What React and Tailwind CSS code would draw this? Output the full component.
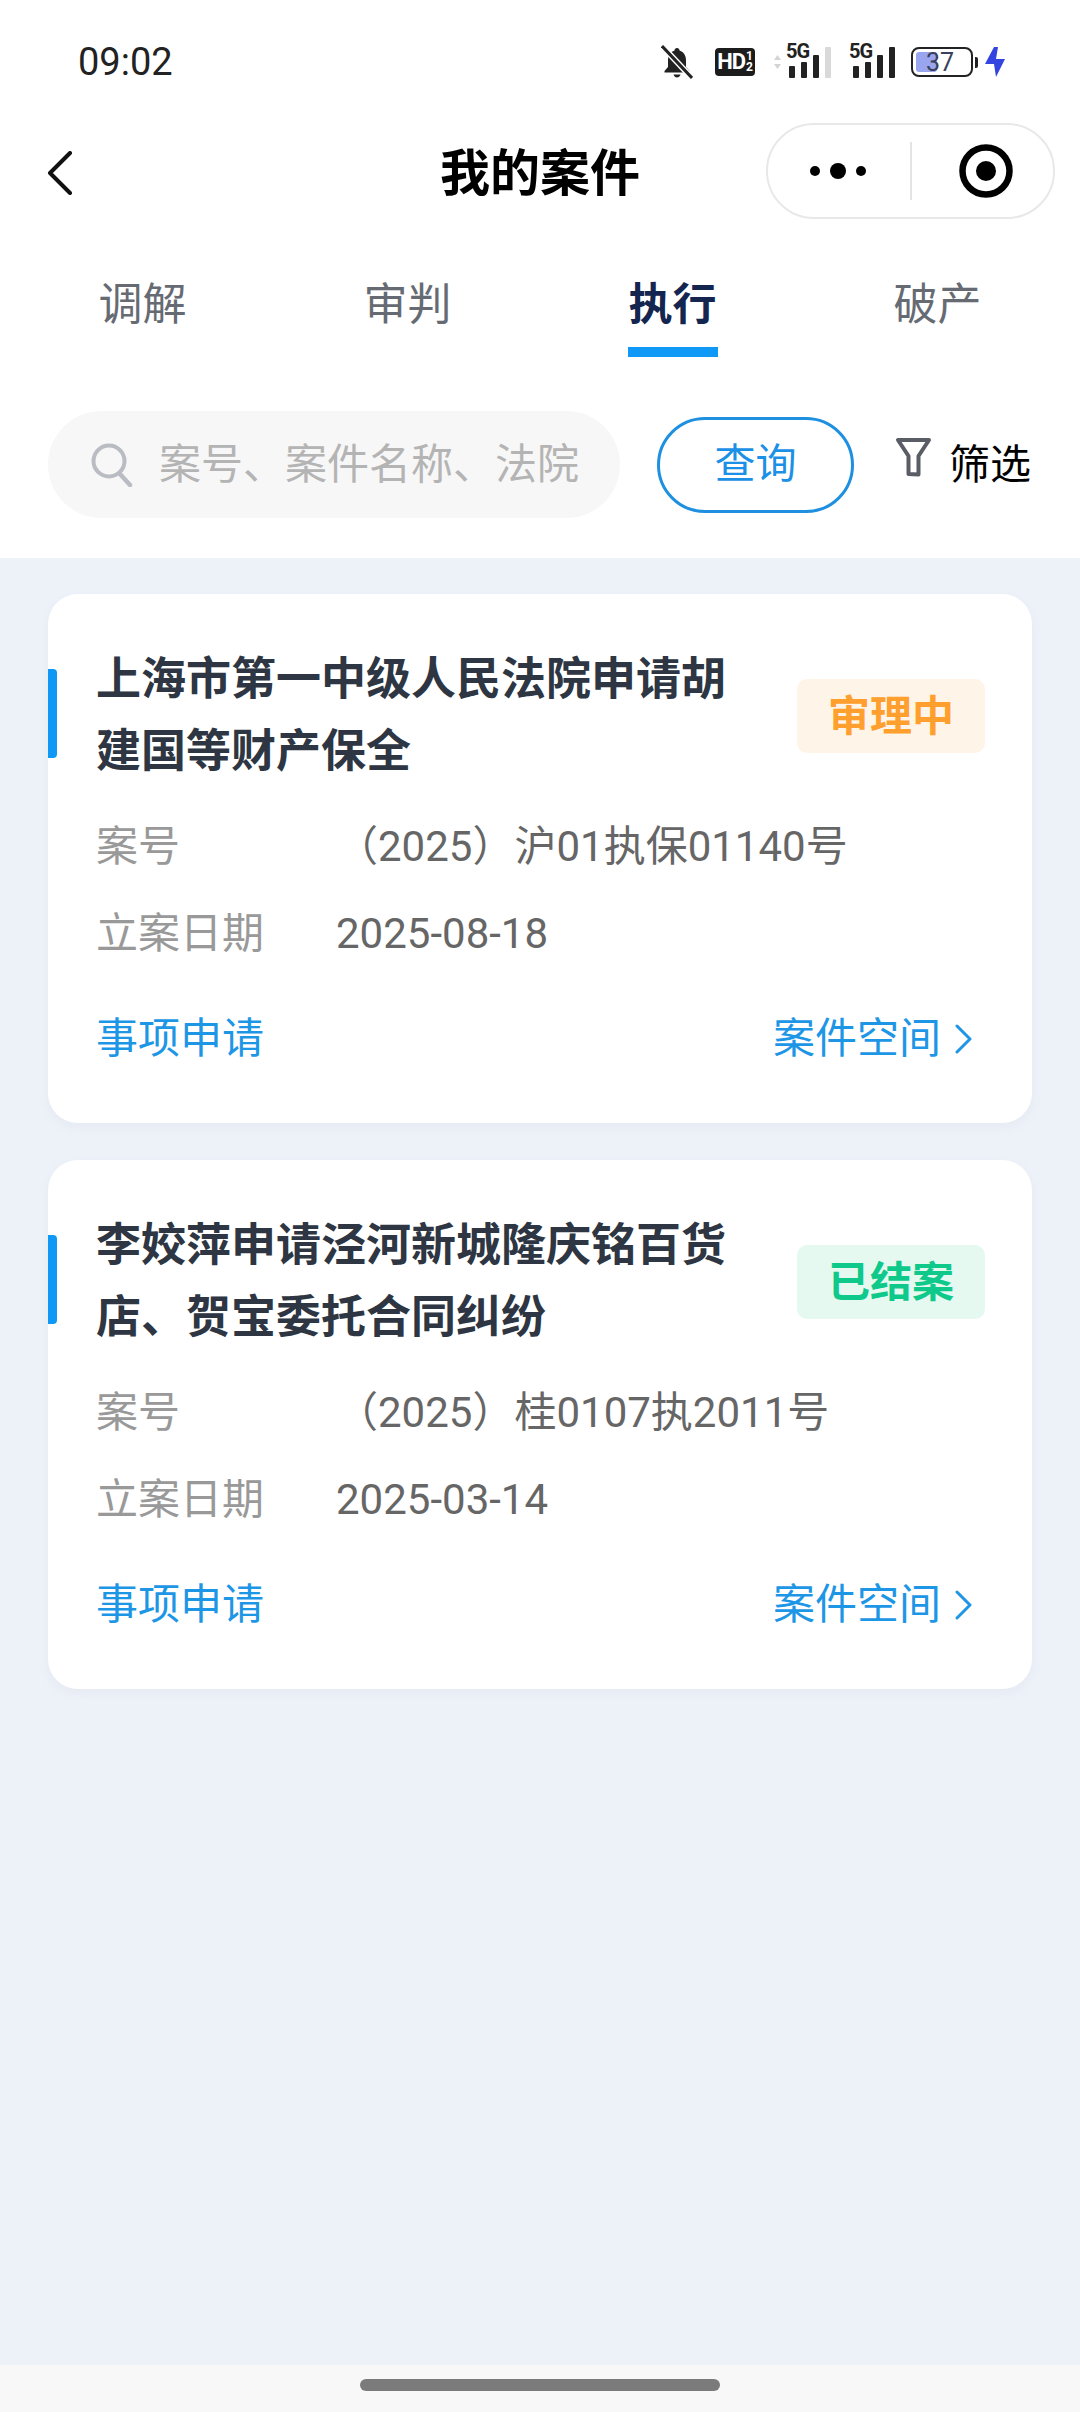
const cases = [
  { title: ["上海市第一中级人民法院申请胡", "建国等财产保全"], status: "审理中", badge: "bg-[#fff4e8] text-[#ff9f2e]", no: "（2025）沪01执保01140号", date: "2025-08-18" },
  { title: ["李姣萍申请泾河新城隆庆铭百货", "店、贺宝委托合同纠纷"], status: "已结案", badge: "bg-[#e6f9f1] text-[#0fc98a]", no: "（2025）桂0107执2011号", date: "2025-03-14" },
];

function SignalBars({ dim }) {
  return (
    <svg width="42" height="31" viewBox="0 0 42 31">
      <rect x="0" y="19" width="6" height="12" rx="1" fill="#222" />
      <rect x="12" y="15" width="6" height="16" rx="1" fill="#222" />
      <rect x="24" y="8" width="6" height="23" rx="1" fill="#222" />
      <rect x="36" y="0" width="6" height="31" rx="1" fill={dim ? "#d9d9d9" : "#222"} />
    </svg>
  );
}

function StatusIcons() {
  return (
    <div className="flex items-center">
      <svg width="32" height="34" viewBox="0 0 32 34">
        <path d="M16 3c-1.500 0-2.500 1-2.500 2.500C9 7 7 11 7 15v7l-3.500 4v1.500h25V26L25 22v-7c0-4-2-8-6.500-9.500C18.500 4 17.500 3 16 3z" fill="#222" />
        <path d="M12.500 29.500h7c-.5 2-2 3-3.500 3s-3-1-3.500-3z" fill="#222" />
        <path d="M1 1l30 32" stroke="#fff" strokeWidth="6" />
        <path d="M1 1l30 32" stroke="#222" strokeWidth="3" />
      </svg>
      <div className="ml-[22px] flex h-[28px] w-[40px] items-center justify-center rounded-[4px] bg-[#1c1c1c] text-[#fff]">
        <span className="text-[22px] leading-none font-bold tracking-[-1px]">HD</span>
        <span className="ml-[1px] flex flex-col text-[12px] leading-[11px] font-bold">
          <span>1</span>
          <span>2</span>
        </span>
      </div>
      <svg className="ml-[18px]" width="9" height="16" viewBox="0 0 9 16">
        <path d="M4.500 1L8 6H1zM4.500 15L1 10h7z" fill="#d4d4d4" />
      </svg>
      <div className="relative ml-[4px] h-[31px] w-[45px]">
        <div className="pl-[3px]"><SignalBars dim /></div>
        <span className="absolute top-[-5px] left-0 bg-white text-[20px] leading-[19px] font-bold tracking-[-1px] text-[#222]">5G</span>
      </div>
      <div className="relative ml-[18px] h-[31px] w-[46px]">
        <div className="pl-[4px]"><SignalBars /></div>
        <span className="absolute top-[-5px] left-0 bg-white text-[20px] leading-[19px] font-bold tracking-[-1px] text-[#222]">5G</span>
      </div>
      <div className="relative ml-[16px] flex h-[30px] w-[62px] items-center justify-center rounded-[8px] border-[2px] border-[#222]">
        <div className="absolute top-[3px] bottom-[3px] left-[3px] w-[21px] rounded-[3px] bg-[#9aa5f0]" />
        <span className="relative pr-[4px] text-[25px] leading-none text-[#3a3f5c]">37</span>
      </div>
      <div className="ml-[2px] h-[11px] w-[3px] rounded-r-[2px] bg-[#222]" />
      <svg className="ml-[7px]" width="20" height="30" viewBox="0 0 20 30">
        <path d="M9 0L0 17h9l2 13 9-18h-9l2-12z" fill="#3344e0" />
      </svg>
    </div>
  );
}

function CaseCard({ item }) {
  return (
    <div className="relative rounded-[30px] bg-white pt-[50px] pr-[47px] pb-[54px] pl-[48px] shadow-[0_4px_10px_rgba(180,190,210,0.12)]">
      <div className="absolute top-[75px] left-0 h-[89px] w-[9px] rounded-r-[4px] bg-[#0f98f5]" />
      <div className="flex items-center justify-between">
        <div className="text-[45px] leading-[72px] font-bold text-[#2d3642]">
          {item.title.map((line) => (
            <div key={line}>{line}</div>
          ))}
        </div>
        <div className={`flex h-[74px] w-[188px] items-center justify-center rounded-[10px] text-[42px] font-bold ${item.badge}`}>
          {item.status}
        </div>
      </div>
      <div className="mt-[29px] flex text-[42px] leading-[60px]">
        <span className="w-[240px] text-[#999999]">案号</span>
        <span className="text-[#666666]">{item.no}</span>
      </div>
      <div className="mt-[27px] flex text-[42px] leading-[60px]">
        <span className="w-[240px] text-[#999999]">立案日期</span>
        <span className="text-[#666666]">{item.date}</span>
      </div>
      <div className="mt-[45px] flex items-center justify-between pr-[12px] text-[42px] leading-[60px] text-[#1e96e6]">
        <span>事项申请</span>
        <span className="flex items-center">
          案件空间
          <svg className="ml-[13px]" width="19" height="30" viewBox="0 0 19 30" fill="none">
            <path d="M3 2l13 13L3 28" stroke="#1e96e6" strokeWidth="3" strokeLinecap="round" strokeLinejoin="round" />
          </svg>
        </span>
      </div>
    </div>
  );
}

export default function App() {
  return (
    <div lang="zh-CN" className="flex h-[2412px] w-[1080px] flex-col overflow-hidden bg-[#edf1f8] font-['Roboto','Noto_Sans_CJK_SC',sans-serif]">
      <div className="h-[558px] bg-white">
        <div className="flex h-[84px] items-center justify-between pt-[40px] pr-[75px] pl-[78px]">
          <span className="text-[38px] leading-none text-[#222]">09:02</span>
          <StatusIcons />
        </div>

        <div className="mt-[39px] grid h-[96px] grid-cols-[1fr_auto_1fr] items-center px-[25px]">
          <svg className="mt-[3px] ml-[22px]" width="26" height="44" viewBox="0 0 26 44" fill="none">
            <path d="M23 2L3 22l20 20" stroke="#111" strokeWidth="4" strokeLinecap="round" strokeLinejoin="round" />
          </svg>
          <span className="pt-[5px] text-[50px] leading-none font-bold text-black">我的案件</span>
          <div className="flex h-[96px] w-[289px] items-center justify-self-end rounded-full border-[2px] border-[#e8e8e8] pl-[41px]">
            <svg width="58" height="18" viewBox="0 0 58 18">
              <circle cx="6" cy="9" r="5" fill="#000" />
              <circle cx="29" cy="9" r="8" fill="#000" />
              <circle cx="52" cy="9" r="5" fill="#000" />
            </svg>
            <div className="ml-[43px] h-[58px] w-[2px] bg-[#e4e4e4]" />
            <svg className="ml-[47px]" width="54" height="54" viewBox="0 0 54 54">
              <circle cx="27" cy="27" r="23.500" fill="none" stroke="#000" strokeWidth="6.500" />
              <circle cx="27" cy="27" r="10" fill="#000" />
            </svg>
          </div>
        </div>

        <div className="mt-[51px] grid h-[90px] grid-cols-4 px-[10px] text-[44px] leading-[70px] text-[#666b73]">
          <div className="flex flex-col items-center"><span>调解</span></div>
          <div className="flex flex-col items-center"><span>审判</span></div>
          <div className="flex flex-col items-center">
            <span className="font-bold text-[#14264f]">执行</span>
            <div className="mt-[7px] h-[10px] w-[90px] bg-[#0f98f5]" />
          </div>
          <div className="flex flex-col items-center"><span>破产</span></div>
        </div>

        <div className="mt-[51px] flex items-center pr-[49px] pl-[48px]">
          <div className="flex h-[107px] w-[572px] items-center rounded-full bg-[#f7f7f7] pl-[43px]">
            <svg width="42" height="44" viewBox="0 0 42 44" fill="none">
              <circle cx="18" cy="18" r="15.500" stroke="#b9bcc2" strokeWidth="4" />
              <path d="M29 31l10 11" stroke="#b9bcc2" strokeWidth="4.500" strokeLinecap="round" />
            </svg>
            <span className="ml-[26px] text-[42px] leading-none whitespace-nowrap text-[#b4b4b4]">案号、案件名称、法院</span>
          </div>
          <div className="ml-[37px] flex h-[96px] w-[197px] items-center justify-center rounded-full border-[3px] border-[#1f90e0] text-[41px] leading-none text-[#1b90e6]">查询</div>
          <svg className="mt-[-14px] ml-[41px]" width="37" height="42" viewBox="0 0 37 42" fill="none">
            <path d="M3 3h31L23.500 19v18.500L13.500 37V19z" stroke="#5a5d65" strokeWidth="4" strokeLinejoin="round" />
          </svg>
          <span className="mt-[1px] ml-[17px] text-[41px] leading-none whitespace-nowrap text-black">筛选</span>
        </div>
      </div>

      <div className="flex flex-1 flex-col gap-[37px] px-[48px] pt-[36px]">
        {cases.map((item) => (
          <CaseCard key={item.no} item={item} />
        ))}
      </div>

      <div className="flex h-[47px] justify-center bg-[#f8f8f8] pt-[14px]">
        <div className="h-[12px] w-[360px] rounded-full bg-[#7b7b7b]" />
      </div>
    </div>
  );
}
